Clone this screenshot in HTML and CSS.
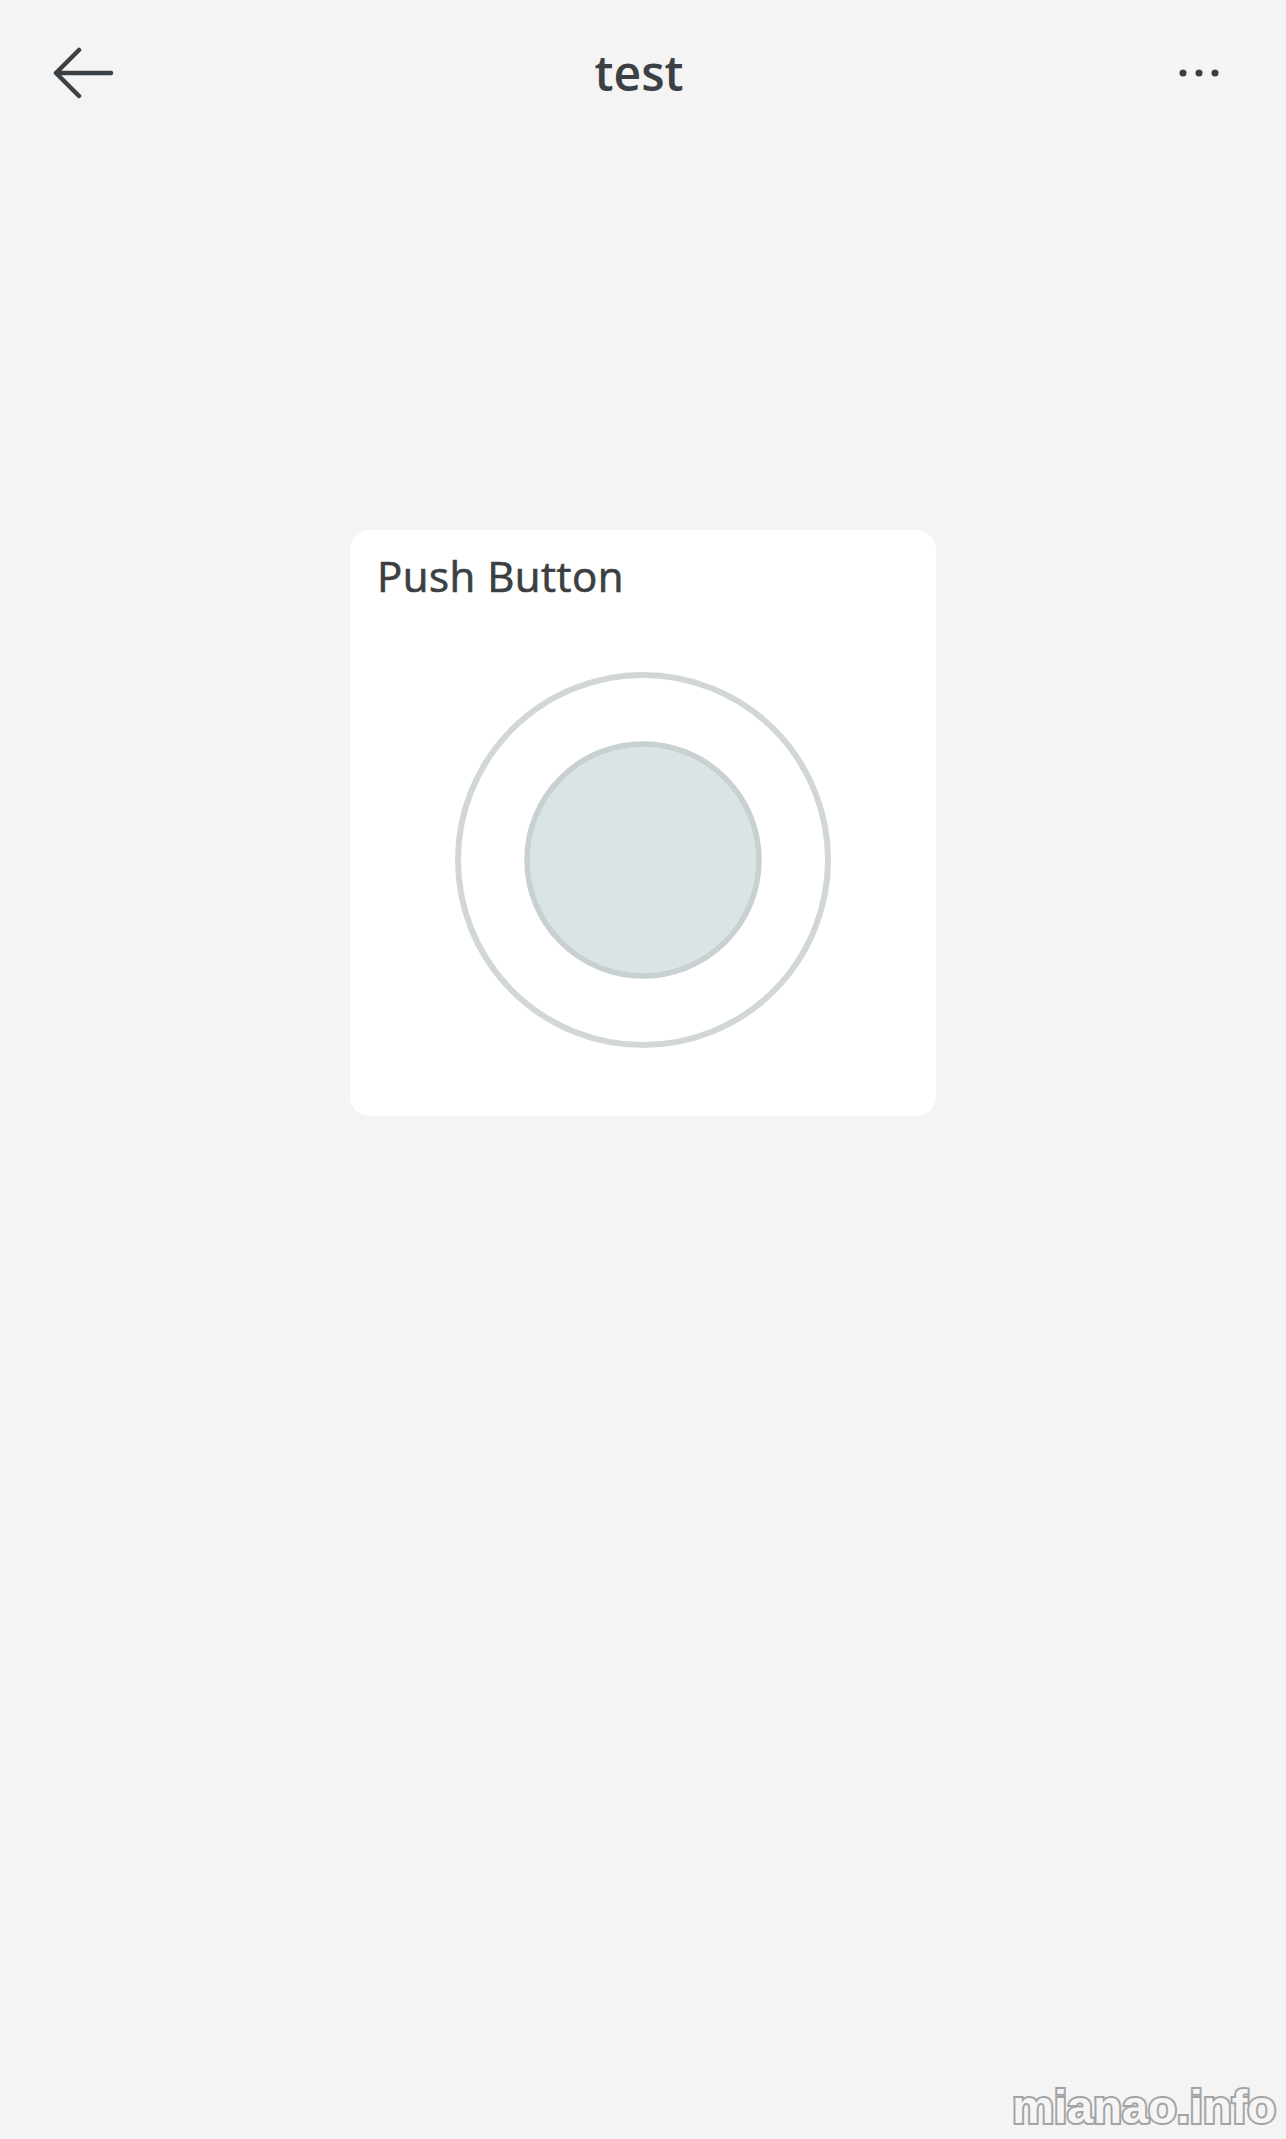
FILE: index.html
```html
<!DOCTYPE html>
<html lang="en">
<head>
<meta charset="utf-8">
<title>test</title>
<link rel="stylesheet" href="styles.css">
</head>
<body>
<div class="page">
  <header class="topbar">
    <div class="bar-left">
      <svg class="icon-back" width="62" height="52" viewBox="0 0 62 52" aria-hidden="true">
        <path d="M27 3 L4 26 L27 49 M4 26 H59" fill="none" stroke="#3b4045" stroke-width="4.5" stroke-linecap="round" stroke-linejoin="round"/>
      </svg>
    </div>
    <h1 class="title">test</h1>
    <div class="bar-right">
      <svg class="icon-more" width="44" height="10" viewBox="0 0 44 10" aria-hidden="true">
        <circle cx="5" cy="5" r="3.5" fill="#3b4045"/>
        <circle cx="21" cy="5" r="3.5" fill="#3b4045"/>
        <circle cx="37" cy="5" r="3.5" fill="#3b4045"/>
      </svg>
    </div>
  </header>

  <main class="content">
    <section class="card">
      <h2 class="card-title">Push Button</h2>
      <div class="button-wrap">
        <svg class="push" width="392" height="392" viewBox="0 0 392 392" aria-hidden="true">
          <circle cx="196" cy="196" r="185" fill="#ffffff" stroke="#d1d7d7" stroke-width="6"/>
          <circle cx="196" cy="196" r="116" fill="#dae4e5" stroke="#c8d0d1" stroke-width="5.5"/>
        </svg>
      </div>
    </section>
  </main>

  <div class="watermark">mianao.info</div>
</div>
</body>
</html>
```

FILE: styles.css
```css
html, body {
  margin: 0;
  padding: 0;
}

body {
  background: #f4f4f4;
  font-family: "Open Sans", "Noto Sans", "Liberation Sans", sans-serif;
  color: #3b4045;
}

.page {
  position: relative;
  min-height: 2139px;
  background: #f4f4f4;
  display: flex;
  flex-direction: column;
}

.topbar {
  height: 146px;
  display: grid;
  grid-template-columns: 1fr auto 1fr;
  align-items: center;
  padding: 0 64px 0 52px;
}

.bar-left {
  display: flex;
  align-items: center;
}

.bar-right {
  display: flex;
  justify-content: flex-end;
  align-items: center;
}

.icon-back,
.icon-more {
  display: block;
}

.title {
  margin: 0;
  font-size: 48px;
  line-height: 48px;
  font-weight: 600;
  color: #3b4045;
  padding-left: 4px;
}

.content {
  display: flex;
  justify-content: center;
}

.card {
  margin-top: 384px;
  width: 586px;
  height: 586px;
  box-sizing: border-box;
  background: #ffffff;
  border-radius: 20px;
  padding: 25px 0 0 27px;
  display: flex;
  flex-direction: column;
}

.card-title {
  margin: 0;
  font-size: 42px;
  line-height: 42px;
  font-weight: 400;
  letter-spacing: 0.5px;
  color: #3b3f42;
  -webkit-text-stroke: 0.7px #3b3f42;
}

.button-wrap {
  display: flex;
  justify-content: center;
  margin-left: -27px;
  margin-top: 67px;
}

.push {
  display: block;
}

.watermark {
  position: absolute;
  right: 10px;
  bottom: 7px;
  font-family: "Liberation Sans", Arial, sans-serif;
  font-size: 47px;
  line-height: 50px;
  font-weight: 700;
  color: #f5f5f5;
  -webkit-text-stroke: 4px #a3a3a3;
  paint-order: stroke fill;
}
```
